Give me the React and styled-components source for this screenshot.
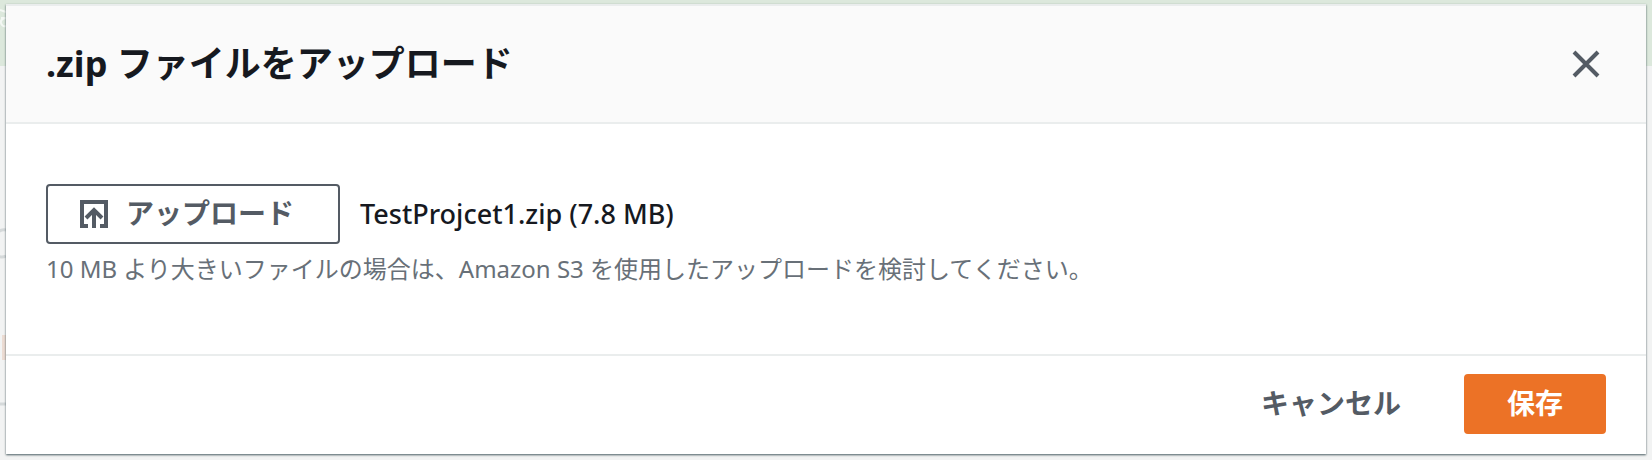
import React from "react";
import styled, { createGlobalStyle } from "styled-components";

const GlobalStyle = createGlobalStyle`
  * { box-sizing: border-box; }
  body {
    margin: 0;
    background: #f2f3f3;
    color: #16191f;
    font-family: "Noto Sans", "Noto Sans CJK JP", sans-serif;
  }
`;

const Page = styled.div`
  position: relative;
  padding: 4px 6px;
`;

const Backdrop = styled.div`
  position: absolute;
  inset: 0;
  overflow: hidden;
`;

const Banner = styled.div`
  height: 66px;
  background: #dce8dc;
`;

const BackdropMarks = styled.svg`
  position: absolute;
  top: 0;
  left: 0;
`;

const Dialog = styled.section`
  position: relative;
  background: #fff;
  box-shadow: 0 1px 2px rgba(0, 28, 36, 0.7);
`;

const Header = styled.header`
  display: flex;
  align-items: center;
  justify-content: space-between;
  height: 120px;
  padding: 0 40px;
  background: #fafafa;
  border-top: 2px solid #eaeded;
  border-bottom: 2px solid #eaeded;
`;

const Title = styled.h2`
  margin: 0;
  font-size: 36px;
  line-height: 44px;
  font-weight: 700;
`;

const CloseButton = styled.button`
  display: flex;
  padding: 6px;
  border: 0;
  background: none;
  color: #545b64;
  cursor: pointer;
`;

const Body = styled.div`
  padding: 60px 40px 67px;
`;

const FileRow = styled.div`
  display: flex;
  align-items: center;
  gap: 20px;
`;

const Button = styled.button`
  display: flex;
  align-items: center;
  justify-content: center;
  gap: 18px;
  height: 60px;
  padding: 0 ${(p) => (p.$variant === "normal" ? 44 : 41)}px 2px ${(p) => (p.$variant === "normal" ? 32 : 41)}px;
  border: 2px solid ${(p) => ({ normal: "#545b64", primary: "#ec7226", link: "transparent" })[p.$variant]};
  border-radius: 4px;
  background: ${(p) => ({ normal: "#fff", primary: "#ec7226", link: "transparent" })[p.$variant]};
  color: ${(p) => (p.$variant === "primary" ? "#fff" : "#545b64")};
  font: inherit;
  font-size: 28px;
  line-height: 40px;
  font-weight: 700;
  cursor: pointer;
`;

const FileName = styled.span`
  font-size: 27px;
  line-height: 40px;
  font-weight: 500;
`;

const Hint = styled.p`
  margin: 7px 0 0;
  color: #687078;
  font-size: 24px;
  line-height: 36px;
`;

const Footer = styled.footer`
  display: flex;
  justify-content: flex-end;
  gap: 20px;
  padding: 18px 40px 20px;
  border-top: 2px solid #eaeded;
`;

function CloseIcon() {
  return (
    <svg width="28" height="28" viewBox="0 0 28 28" fill="none" stroke="currentColor" strokeWidth="4" aria-hidden="true">
      <path d="M2 2l24 24M26 2L2 26" />
    </svg>
  );
}

function UploadIcon() {
  return (
    <svg width="28" height="30" viewBox="0 -2 28 30" fill="none" stroke="currentColor" strokeWidth="4" aria-hidden="true">
      <path d="M8 26H2V2h24v24h-6M14 28V10M6 18l8-8 8 8" />
    </svg>
  );
}

export default function App() {
  return (
    <Page>
      <GlobalStyle />
      <Backdrop aria-hidden="true">
        <Banner />
        <BackdropMarks width="8" height="460" fill="none">
          <path d="M0 10l6 2M1 18h5M6 18q-6 1-5 5t5 3" stroke="#f4f8f4" strokeWidth="2" />
          <path d="M6 230q-4-1-8 2M6 256q-4 2-8 0" stroke="#d5d9da" strokeWidth="3" />
          <path d="M4 335v25" stroke="#ecdcd3" strokeWidth="4" />
          <path d="M0 404h8" stroke="#d5d9da" strokeWidth="3" />
        </BackdropMarks>
      </Backdrop>
      <Dialog role="dialog" aria-labelledby="dialog-title">
        <Header>
          <Title id="dialog-title">.zip ファイルをアップロード</Title>
          <CloseButton type="button" aria-label="閉じる">
            <CloseIcon />
          </CloseButton>
        </Header>
        <Body>
          <FileRow>
            <Button type="button" $variant="normal" aria-describedby="upload-hint">
              <UploadIcon />
              アップロード
            </Button>
            <FileName>TestProjcet1.zip (7.8 MB)</FileName>
          </FileRow>
          <Hint id="upload-hint">
            10 MB より大きいファイルの場合は、Amazon S3 を使用したアップロードを検討してください。
          </Hint>
        </Body>
        <Footer>
          <Button type="button" $variant="link">キャンセル</Button>
          <Button type="button" $variant="primary">保存</Button>
        </Footer>
      </Dialog>
    </Page>
  );
}
